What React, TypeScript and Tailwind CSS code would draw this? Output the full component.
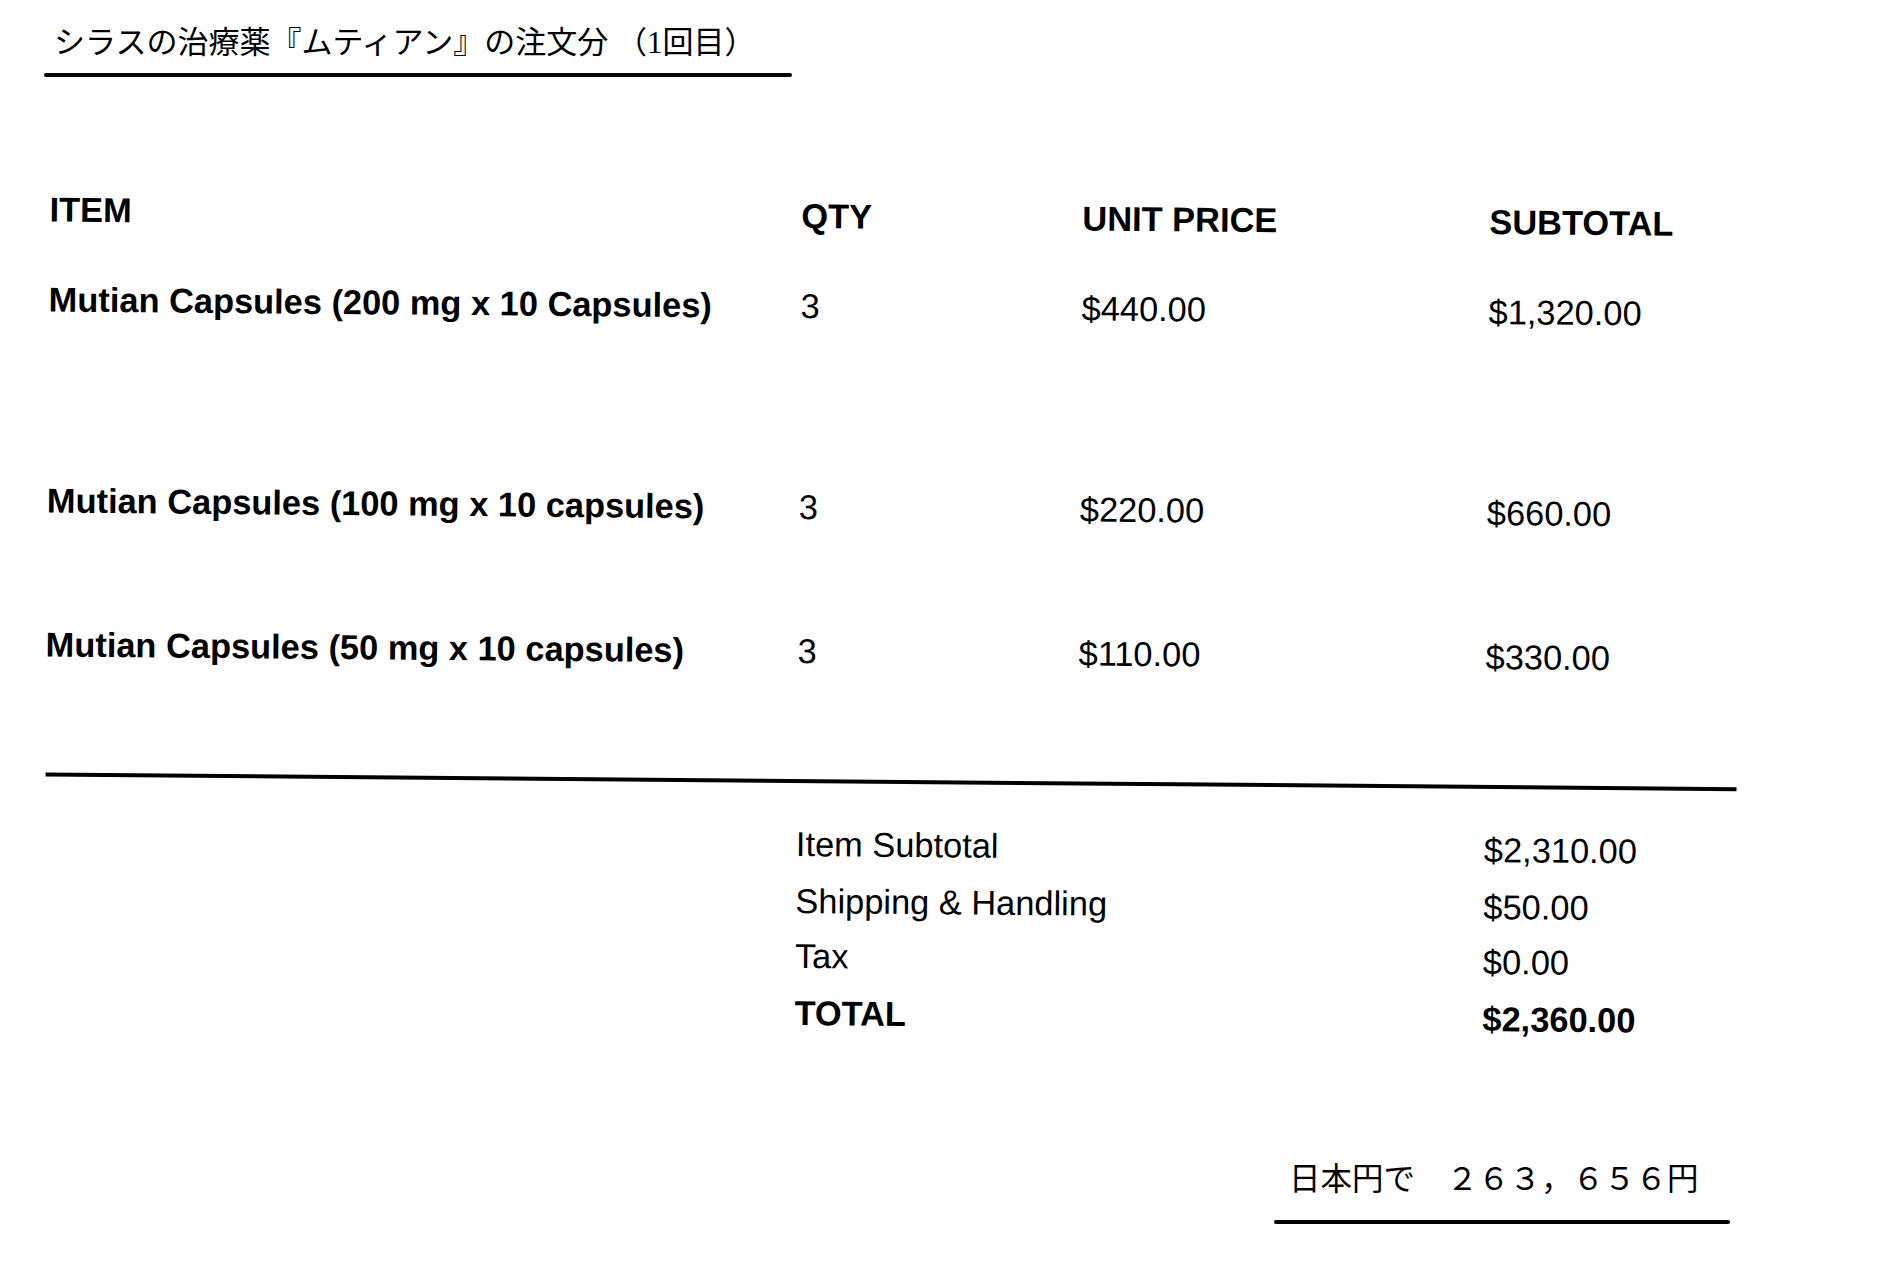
export default function App() {
  const rows = [
    { item: "Mutian Capsules (200 mg x 10 Capsules)", qty: "3", unit: "$440.00", sub: "$1,320.00", mt: "mt-[50px]" },
    { item: "Mutian Capsules (100 mg x 10 capsules)", qty: "3", unit: "$220.00", sub: "$660.00", mt: "mt-[161px]" },
    { item: "Mutian Capsules (50 mg x 10 capsules)", qty: "3", unit: "$110.00", sub: "$330.00", mt: "mt-[104px]" },
  ];
  return (
    <div className="w-[1877px] h-[1281px] bg-white text-black overflow-hidden">
      <div className="pt-[23px] pl-[54px] text-[31px] leading-[40px] font-['Liberation_Serif','Noto_Sans_CJK_JP',serif] whitespace-pre">
        シラスの治療薬『ムティアン』の注文分 （1回目）
      </div>
      <div className="ml-[44px] mt-[10px] w-[748px] h-[4px] bg-black rounded-full" />

      <div className="mt-[73px] pt-[39px] origin-top-left rotate-[0.5deg] font-['Liberation_Sans',Arial,sans-serif] text-[34.4px] leading-[40px]">
        <div className="grid grid-cols-[752px_281px_407px_1fr] pl-[50px] font-bold">
          <div>ITEM</div>
          <div>QTY</div>
          <div>UNIT PRICE</div>
          <div>SUBTOTAL</div>
        </div>
        {rows.map((r) => (
          <div key={r.item} className={`grid grid-cols-[752px_281px_407px_1fr] pl-[50px] ${r.mt}`}>
            <div className="font-bold whitespace-nowrap">{r.item}</div>
            <div>{r.qty}</div>
            <div>{r.unit}</div>
            <div>{r.sub}</div>
          </div>
        ))}
        <div className="ml-[51px] mt-[108px] w-[1691px] h-[4px] bg-black" />
        <div className="grid grid-cols-[752px_281px_407px_1fr] pl-[50px] mt-[41px]">
          <div className="col-start-2 col-span-2">Item Subtotal</div>
          <div>$2,310.00</div>
        </div>
        <div className="grid grid-cols-[752px_281px_407px_1fr] pl-[50px] mt-[17px]">
          <div className="col-start-2 col-span-2">Shipping &amp; Handling</div>
          <div>$50.00</div>
        </div>
        <div className="grid grid-cols-[752px_281px_407px_1fr] pl-[50px] mt-[15px]">
          <div className="col-start-2 col-span-2">Tax</div>
          <div>$0.00</div>
        </div>
        <div className="grid grid-cols-[752px_281px_407px_1fr] pl-[50px] mt-[17px] font-bold">
          <div className="col-start-2 col-span-2">TOTAL</div>
          <div>$2,360.00</div>
        </div>
      </div>

      <div className="ml-[1274px] mt-[134px] w-[456px]">
        <div className="pl-[15px] text-[31.5px] leading-[40px] font-['Liberation_Serif','Noto_Sans_CJK_JP',serif] whitespace-pre">
          日本円で　２６３，６５６円
        </div>
        <div className="mt-[20px] h-[4px] bg-black rounded-full" />
      </div>
    </div>
  );
}
